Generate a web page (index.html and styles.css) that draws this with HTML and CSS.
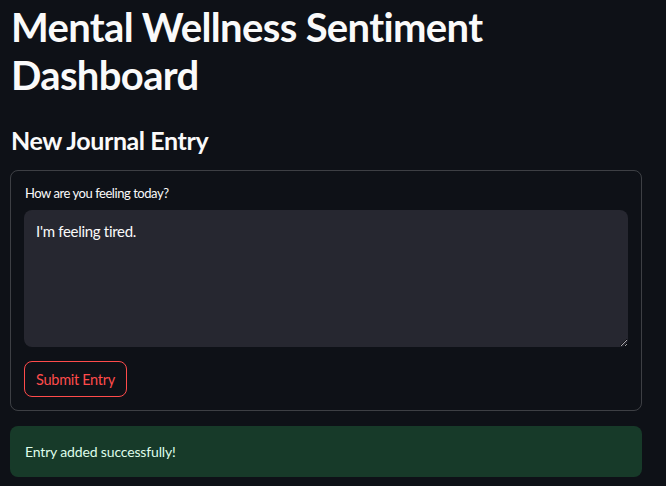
FILE: index.html
```html
<!DOCTYPE html>
<html lang="en">
<head>
<meta charset="utf-8">
<title>Mental Wellness Sentiment Dashboard</title>
<link rel="stylesheet" href="styles.css">
</head>
<body>
<main class="page">
  <h1 class="title">Mental Wellness Sentiment Dashboard</h1>
  <h2 class="subtitle">New Journal Entry</h2>
  <form class="entry-form">
    <label class="field-label" for="entry">How are you feeling today?</label>
    <textarea id="entry" class="entry-text">I'm feeling tired.</textarea>
    <div class="actions">
      <button type="button" class="submit-btn">Submit Entry</button>
    </div>
  </form>
  <div class="alert-success">Entry added successfully!</div>
</main>
</body>
</html>
```
FILE: styles.css
```css
* { box-sizing: border-box; }
html, body {
  margin: 0;
  background: #0e1117;
  color: #fafafa;
  font-family: Lato, "Noto Sans", sans-serif;
}
.page {
  padding: 3px 24px 0 10px;
  display: flex;
  flex-direction: column;
}
.title {
  margin: 0;
  font-size: 40px;
  line-height: 48px;
  font-weight: 700;
  letter-spacing: -0.65px;
  padding-left: 1px;
}
.subtitle {
  margin: 25px 0 0 0;
  font-size: 25px;
  line-height: 32px;
  font-weight: 700;
  letter-spacing: -0.4px;
  padding-left: 1px;
}
.entry-form {
  margin-top: 14px;
  border: 1px solid rgba(250, 250, 250, 0.2);
  border-radius: 8px;
  padding: 12px 13px 13px 13px;
  display: flex;
  flex-direction: column;
}
.field-label {
  font-size: 13px;
  line-height: 21px;
  letter-spacing: -0.45px;
  margin-bottom: 6px;
  padding-left: 1px;
}
.entry-text {
  display: block;
  width: 100%;
  height: 137px;
  background: #262730;
  color: #fafafa;
  border: none;
  border-radius: 8px;
  padding: 10px 12px;
  font-family: inherit;
  font-size: 15px;
  line-height: 22.4px;
  letter-spacing: -0.3px;
  outline: none;
}
.actions {
  margin-top: 14px;
  display: flex;
}
.submit-btn {
  height: 36px;
  width: 103px;
  padding: 0;
  background: transparent;
  color: #ff4b4b;
  border: 1px solid #ff4b4b;
  border-radius: 8px;
  font-family: inherit;
  font-size: 14.5px;
  letter-spacing: -0.3px;
}
.alert-success {
  margin-top: 15px;
  height: 51px;
  display: flex;
  align-items: center;
  padding: 0 15px;
  background: #173a29;
  color: #dffde9;
  border-radius: 8px;
  font-size: 14px;
  letter-spacing: -0.15px;
}
```
